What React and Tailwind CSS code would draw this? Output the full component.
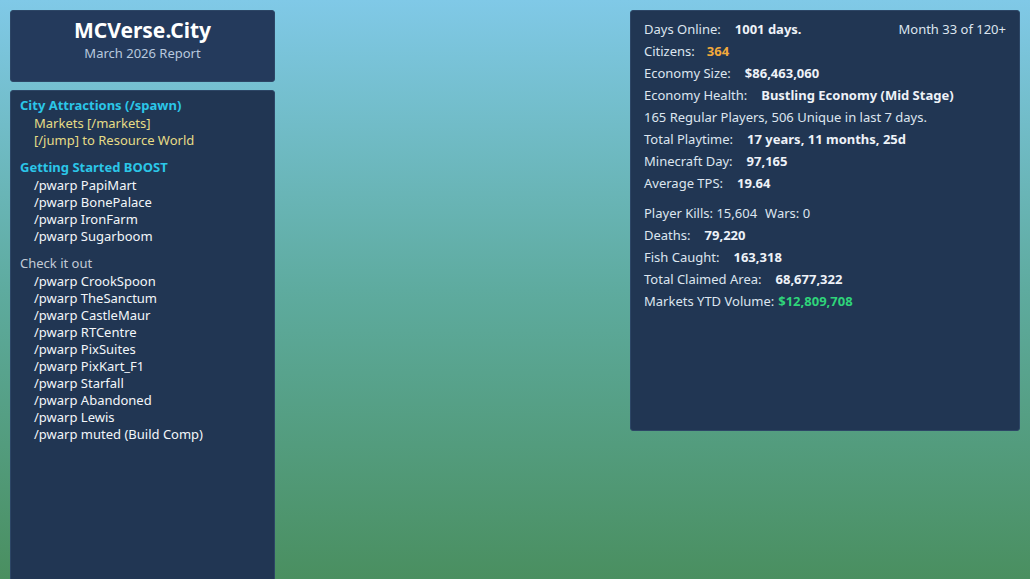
import React from "react";

const BOOST = ["PapiMart", "BonePalace", "IronFarm", "Sugarboom"];
const CHECK = ["CrookSpoon", "TheSanctum", "CastleMaur", "RTCentre", "PixSuites", "PixKart_F1", "Starfall", "Abandoned", "Lewis", "muted (Build Comp)"];

function Stat({ label, children, gap = "ml-[14px]" }) {
  return (
    <div className="h-[22px] leading-[22px] whitespace-nowrap">
      <span>{label}</span>
      <span className={`${gap} font-bold text-[#eef2f8]`}>{children}</span>
    </div>
  );
}

export default function App() {
  return (
    <div
      className="h-[579px] w-[1030px] overflow-hidden bg-gradient-to-b from-[#80c9e7] via-[#5eab9f] to-[#4a8f60] text-[13px]"
      style={{ fontFamily: '"Noto Sans", "Open Sans", sans-serif' }}
    >
      <div className="flex items-start justify-between px-[10px] pt-[10px]">
        <div className="flex w-[265px] flex-col gap-[8px]">
          <div className="flex h-[72px] flex-col items-center rounded-[3px] border border-[#2d4666] bg-[#243a5c] pt-[5px]">
            <div className="text-[21px] font-bold leading-[28px] text-white">MCVerse.City</div>
            <div className="leading-[18px] text-[#b8c8de]">March 2026 Report</div>
          </div>

          <div className="h-[520px] rounded-[3px] border border-[#2d4666] bg-[#213653] px-[9px] pt-[5px] leading-[17px]">
            <div className="font-bold leading-[19px] text-[#2bc6e8]">City Attractions (/spawn)</div>
            <div className="pl-[14px] text-[#e6dc86]">
              <div>Markets [/markets]</div>
              <div>[/jump] to Resource World</div>
            </div>

            <div className="mt-[9px] font-bold leading-[19px] text-[#2bc6e8]">Getting Started BOOST</div>
            <div className="pl-[14px] text-[#f3f6fa]">
              {BOOST.map((n) => (
                <div key={n}>/pwarp {n}</div>
              ))}
            </div>

            <div className="mt-[9px] leading-[19px] text-[#c3cbd6]">Check it out</div>
            <div className="pl-[14px] text-[#f3f6fa]">
              {CHECK.map((n) => (
                <div key={n}>/pwarp {n}</div>
              ))}
            </div>
          </div>
        </div>

        <div className="h-[421px] w-[390px] rounded-[3px] border border-[#2d4666] bg-[#213653] px-[13px] pt-[7px] text-[#dde5ef]">
          <div className="flex justify-between">
            <Stat label="Days Online:">1001 days.</Stat>
            <div className="leading-[22px]">Month 33 of 120+</div>
          </div>
          <Stat label="Citizens:" gap="ml-[12px]">
            <span className="text-[#f2a93b]">364</span>
          </Stat>
          <Stat label="Economy Size:">$86,463,060</Stat>
          <Stat label="Economy Health:">Bustling Economy (Mid Stage)</Stat>
          <div className="h-[22px] leading-[22px]">165 Regular Players, 506 Unique in last 7 days.</div>
          <Stat label="Total Playtime:">17 years, 11 months, 25d</Stat>
          <Stat label="Minecraft Day:">97,165</Stat>
          <Stat label="Average TPS:">19.64</Stat>

          <div className="mt-[8px] h-[22px] leading-[22px] whitespace-nowrap">
            Player Kills: 15,604<span className="ml-[8px]">Wars: 0</span>
          </div>
          <Stat label="Deaths:">79,220</Stat>
          <Stat label="Fish Caught:">163,318</Stat>
          <Stat label="Total Claimed Area:">68,677,322</Stat>
          <Stat label="Markets YTD Volume:" gap="ml-[4px]">
            <span className="text-[#2fd47a]">$12,809,708</span>
          </Stat>
        </div>
      </div>
    </div>
  );
}
